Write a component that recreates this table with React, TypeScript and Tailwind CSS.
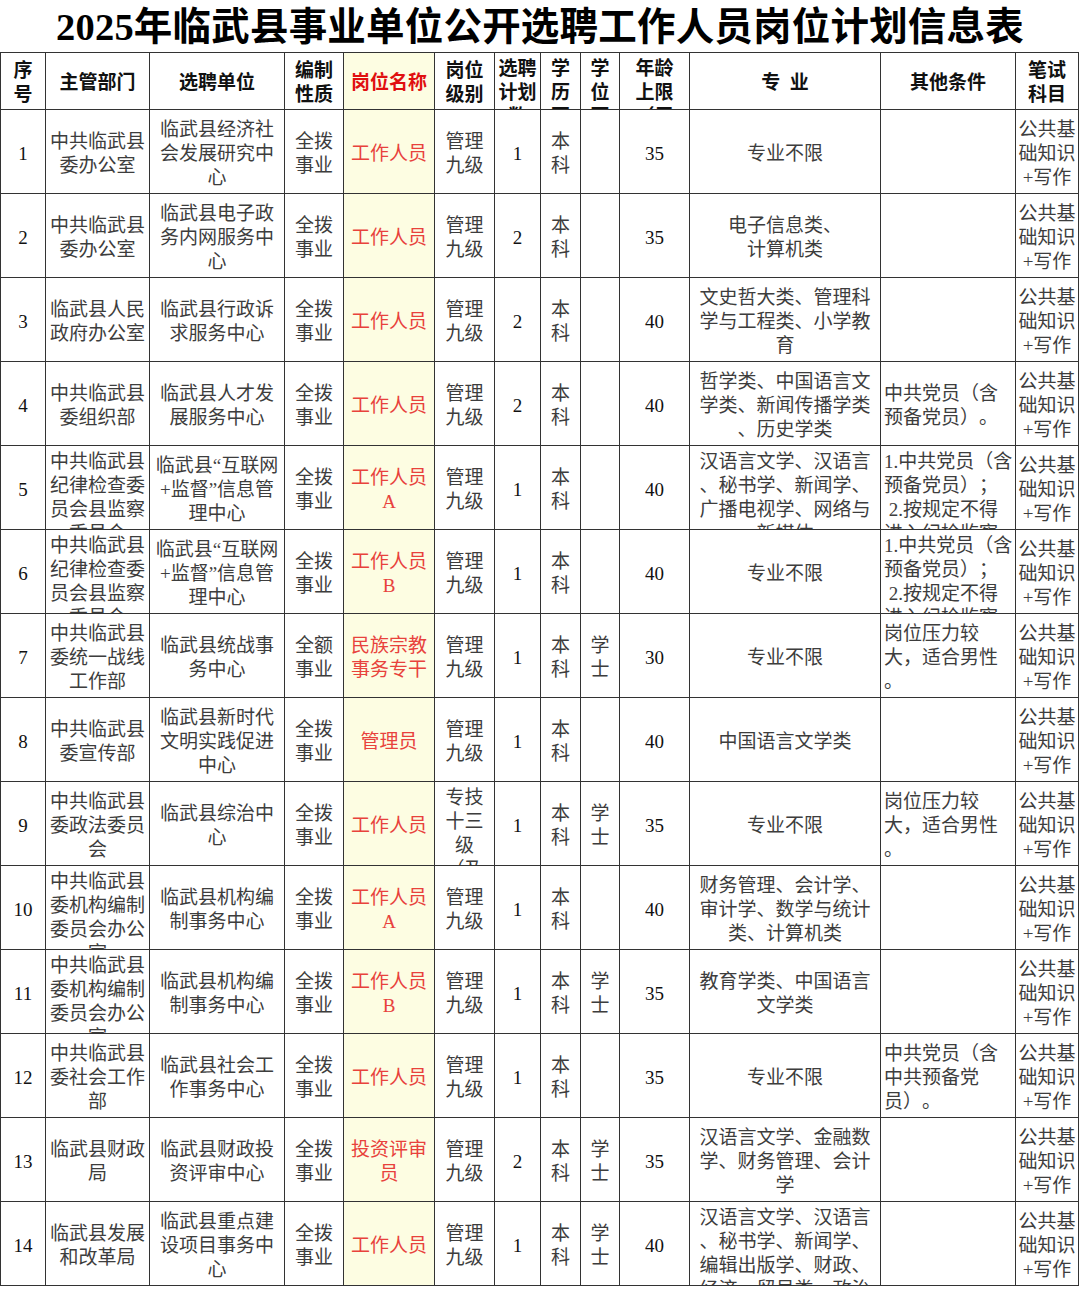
import React from "react";

type Row = {
  n: string;
  dept: string[];
  unit: string[];
  kind: string[];
  post: string[];
  level: string[];
  plan: string;
  deg: string[];
  age: string;
  major: string[];
  other: string[];
};

const EXAM = ["公共基", "础知识", "+写作"];
const EDU = ["本", "科"];
const XS = ["学", "士"];
const QB = ["全拨", "事业"];
const GL = ["管理", "九级"];

const rows: Row[] = [
  { n: "1", dept: ["中共临武县", "委办公室"], unit: ["临武县经济社", "会发展研究中", "心"], kind: QB, post: ["工作人员"], level: GL, plan: "1", deg: [], age: "35", major: ["专业不限"], other: [] },
  { n: "2", dept: ["中共临武县", "委办公室"], unit: ["临武县电子政", "务内网服务中", "心"], kind: QB, post: ["工作人员"], level: GL, plan: "2", deg: [], age: "35", major: ["电子信息类、", "计算机类"], other: [] },
  { n: "3", dept: ["临武县人民", "政府办公室"], unit: ["临武县行政诉", "求服务中心"], kind: QB, post: ["工作人员"], level: GL, plan: "2", deg: [], age: "40", major: ["文史哲大类、管理科", "学与工程类、小学教", "育"], other: [] },
  { n: "4", dept: ["中共临武县", "委组织部"], unit: ["临武县人才发", "展服务中心"], kind: QB, post: ["工作人员"], level: GL, plan: "2", deg: [], age: "40", major: ["哲学类、中国语言文", "学类、新闻传播学类", "、历史学类"], other: ["中共党员（含", "预备党员）。"] },
  { n: "5", dept: ["中共临武县", "纪律检查委", "员会县监察", "委员会"], unit: ["临武县“互联网", "+监督”信息管", "理中心"], kind: QB, post: ["工作人员", "A"], level: GL, plan: "1", deg: [], age: "40", major: ["汉语言文学、汉语言", "、秘书学、新闻学、", "广播电视学、网络与", "新媒体"], other: ["1.中共党员（含", "预备党员）；", " 2.按规定不得", "进入纪检监察"] },
  { n: "6", dept: ["中共临武县", "纪律检查委", "员会县监察", "委员会"], unit: ["临武县“互联网", "+监督”信息管", "理中心"], kind: QB, post: ["工作人员", "B"], level: GL, plan: "1", deg: [], age: "40", major: ["专业不限"], other: ["1.中共党员（含", "预备党员）；", " 2.按规定不得", "进入纪检监察"] },
  { n: "7", dept: ["中共临武县", "委统一战线", "工作部"], unit: ["临武县统战事", "务中心"], kind: ["全额", "事业"], post: ["民族宗教", "事务专干"], level: GL, plan: "1", deg: XS, age: "30", major: ["专业不限"], other: ["岗位压力较", "大，适合男性", "。"] },
  { n: "8", dept: ["中共临武县", "委宣传部"], unit: ["临武县新时代", "文明实践促进", "中心"], kind: QB, post: ["管理员"], level: GL, plan: "1", deg: [], age: "40", major: ["中国语言文学类"], other: [] },
  { n: "9", dept: ["中共临武县", "委政法委员", "会"], unit: ["临武县综治中", "心"], kind: QB, post: ["工作人员"], level: ["专技", "十三", "级", "（及"], plan: "1", deg: XS, age: "35", major: ["专业不限"], other: ["岗位压力较", "大，适合男性", "。"] },
  { n: "10", dept: ["中共临武县", "委机构编制", "委员会办公", "室"], unit: ["临武县机构编", "制事务中心"], kind: QB, post: ["工作人员", "A"], level: GL, plan: "1", deg: [], age: "40", major: ["财务管理、会计学、", "审计学、数学与统计", "类、计算机类"], other: [] },
  { n: "11", dept: ["中共临武县", "委机构编制", "委员会办公", "室"], unit: ["临武县机构编", "制事务中心"], kind: QB, post: ["工作人员", "B"], level: GL, plan: "1", deg: XS, age: "35", major: ["教育学类、中国语言", "文学类"], other: [] },
  { n: "12", dept: ["中共临武县", "委社会工作", "部"], unit: ["临武县社会工", "作事务中心"], kind: QB, post: ["工作人员"], level: GL, plan: "1", deg: [], age: "35", major: ["专业不限"], other: ["中共党员（含", "中共预备党", "员）。"] },
  { n: "13", dept: ["临武县财政", "局"], unit: ["临武县财政投", "资评审中心"], kind: QB, post: ["投资评审", "员"], level: GL, plan: "2", deg: XS, age: "35", major: ["汉语言文学、金融数", "学、财务管理、会计", "学"], other: [] },
  { n: "14", dept: ["临武县发展", "和改革局"], unit: ["临武县重点建", "设项目事务中", "心"], kind: QB, post: ["工作人员"], level: GL, plan: "1", deg: XS, age: "40", major: ["汉语言文学、汉语言", "、秘书学、新闻学、", "编辑出版学、财政、", "经济、贸易类、政治"], other: [] },
];

const GRID =
  "grid grid-cols-[45px_104px_135px_59px_91px_60px_46px_40px_39px_70px_191px_135px_63px]";

function Cell({
  lines,
  left = false,
  extra = "",
}: {
  lines: string[];
  left?: boolean;
  extra?: string;
}) {
  return (
    <div
      className={`flex flex-col [justify-content:safe_center] overflow-hidden border-r border-b border-[#333] pt-[4px] ${
        left ? "items-start pl-[3px]" : "items-center"
      } ${extra}`}
    >
      {lines.map((l, i) => (
        <div key={i} className="whitespace-pre leading-[24px] [text-spacing-trim:space-all]">
          {l}
        </div>
      ))}
    </div>
  );
}

const YELLOW = "bg-[#fdfde2]";

export default function App() {
  return (
    <div className="w-[1080px] h-[1289px] bg-white overflow-hidden font-['Liberation_Serif','Noto_Sans_CJK_SC',serif]">
      <div className="h-[52px] flex items-center justify-center">
        <h1 className="text-[38.5px] font-bold text-black leading-none tracking-[0.2px] pt-[2px]">
          2025年临武县事业单位公开选聘工作人员岗位计划信息表
        </h1>
      </div>
      <div className="w-[1079px] border-l border-t border-[#333]">
        <div className={`${GRID} h-[57px] text-[19px] font-bold text-[#111]`}>
          <Cell lines={["序", "号"]} />
          <Cell lines={["主管部门"]} />
          <Cell lines={["选聘单位"]} />
          <Cell lines={["编制", "性质"]} />
          <Cell lines={["岗位名称"]} extra={`${YELLOW} text-[#e01010]`} />
          <Cell lines={["岗位", "级别"]} />
          <Cell lines={["选聘", "计划", "数"]} />
          <Cell lines={["学", "历", "要"]} />
          <Cell lines={["学", "位", "要"]} />
          <Cell lines={["年龄", "上限", "（周"]} />
          <Cell lines={["专\u2002业"]} />
          <Cell lines={["其他条件"]} />
          <Cell lines={["笔试", "科目"]} />
        </div>
        {rows.map((r) => (
          <div key={r.n} className={`${GRID} h-[84px] text-[19px] text-[#3d3d3d]`}>
            <Cell lines={[r.n]} extra="text-[#111]" />
            <Cell lines={r.dept} />
            <Cell lines={r.unit} />
            <Cell lines={r.kind} />
            <Cell lines={r.post} extra={`${YELLOW} text-[#e8423c]`} />
            <Cell lines={r.level} />
            <Cell lines={[r.plan]} extra="text-[#111]" />
            <Cell lines={EDU} />
            <Cell lines={r.deg} />
            <Cell lines={[r.age]} extra="text-[#111]" />
            <Cell lines={r.major} />
            <Cell lines={r.other} left />
            <Cell lines={EXAM} />
          </div>
        ))}
      </div>
    </div>
  );
}
